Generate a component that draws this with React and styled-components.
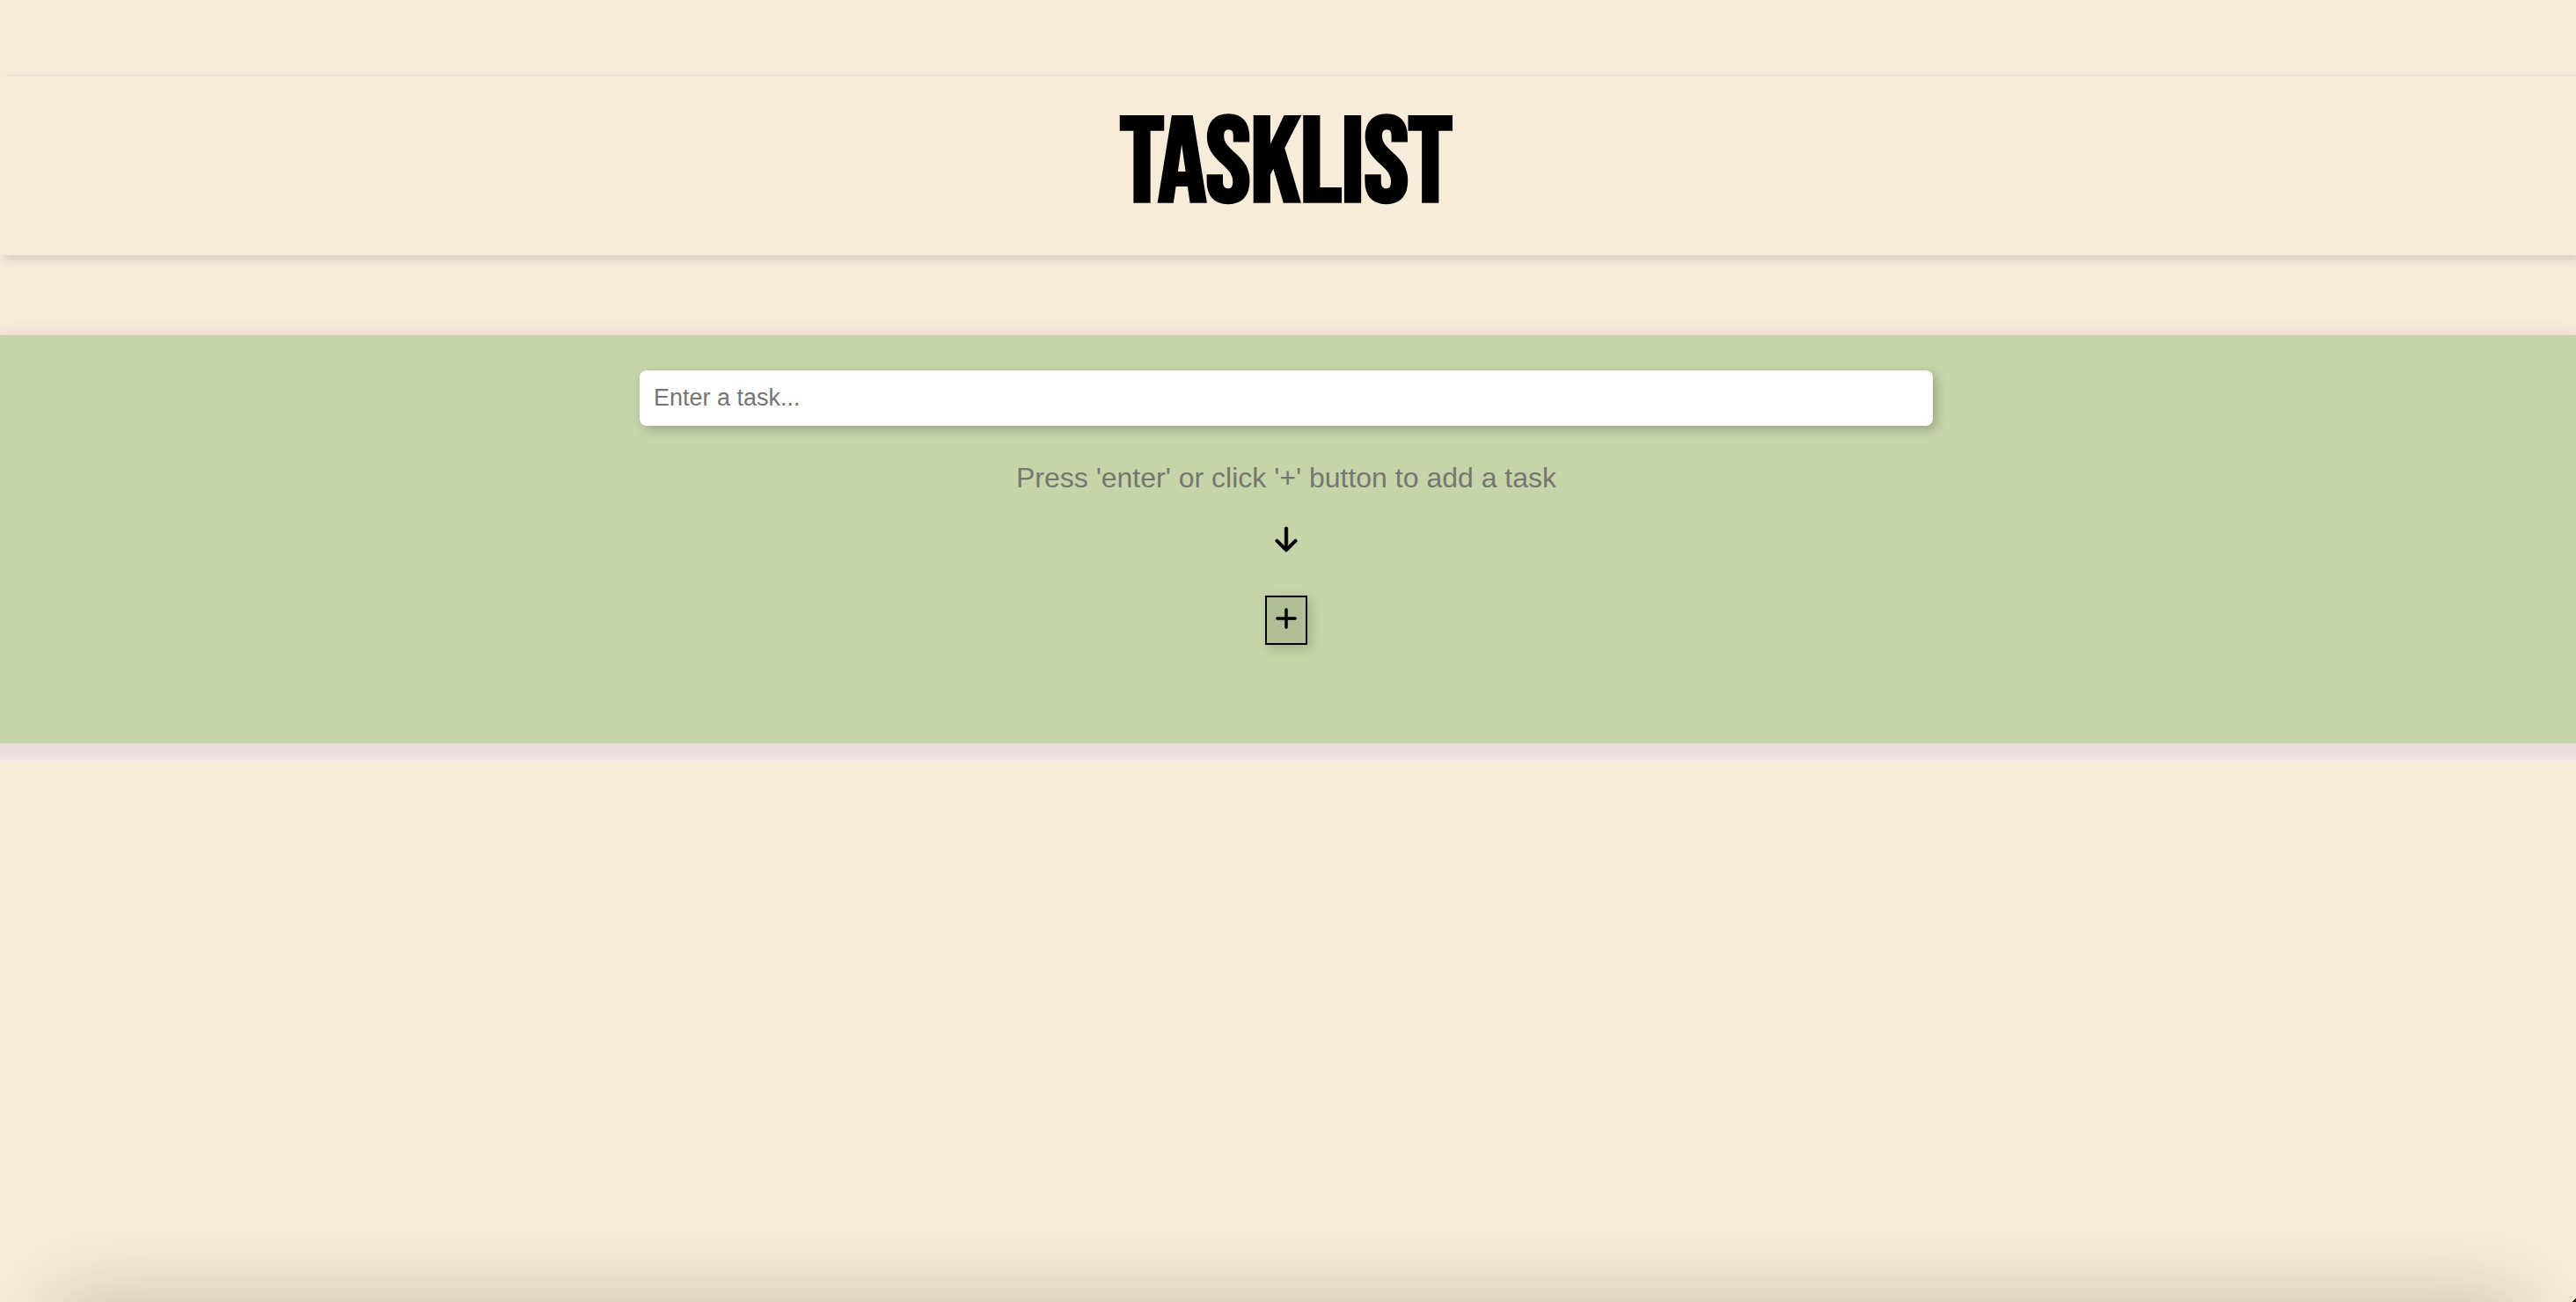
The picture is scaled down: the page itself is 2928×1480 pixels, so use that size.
import React, { useState } from "react";
import styled, { createGlobalStyle } from "styled-components";
import { BsArrowDownShort, BsPlus } from "react-icons/bs";

const GlobalStyle = createGlobalStyle`
  *, *::before, *::after { box-sizing: border-box; }
  body {
    margin: 0;
    background: #f7ebda;
    color: #000;
    font-family: "Liberation Sans", Arial, sans-serif;
  }
`;

const Page = styled.div`
  display: flex;
  flex-direction: column;
  min-height: 100vh;
  padding-top: 87px;
  overflow: hidden;
  position: relative;
`;

const Header = styled.header`
  display: flex;
  justify-content: center;
  align-items: center;
  height: 203px;
  padding-right: 4px;
  background: #f7ebda;
  box-shadow: 4px 4px 12px rgba(0, 0, 0, 0.15);
`;

const Title = styled.h1`
  margin: 0;
  font-family: "Bebas Neue", "Liberation Sans Narrow", "Liberation Sans", sans-serif;
  font-size: 136px;
  line-height: 160px;
  font-weight: 700;
  text-transform: uppercase;
`;

const EntryForm = styled.form`
  display: flex;
  flex-direction: column;
  align-items: center;
  margin-top: 91px;
  padding: 40px 4px 112px 0;
  background: #c6d4a9;
  box-shadow: 0 0 16px rgba(210, 150, 140, 0.3);
`;

const TaskInput = styled.input`
  width: calc(50% + 8px);
  height: 63px;
  padding: 0 16px;
  border: 0;
  border-radius: 8px;
  background: #fff;
  font: 27px "Liberation Sans", Arial, sans-serif;
  box-shadow: 4px 4px 12px rgba(0, 0, 0, 0.22);
  &::placeholder { color: #757575; opacity: 1; }
`;

const Hint = styled.p`
  margin: 40px 0 0;
  font-size: 32px;
  line-height: 38px;
  color: #75776f;
`;

const Arrow = styled(BsArrowDownShort)`
  display: block;
  width: 56px;
  height: 56px;
  margin-top: 23px;
  stroke-width: 0.2px;
`;

const AddButton = styled.button`
  display: flex;
  justify-content: center;
  align-items: center;
  width: 48px;
  height: 56px;
  margin-top: 36px;
  padding: 0 0 4px;
  border: 2px solid #000;
  background: #b1bd97;
  color: #000;
  box-shadow: 4px 4px 12px rgba(0, 0, 0, 0.18);
  svg {
    flex: none;
    width: 46px;
    height: 46px;
    stroke-width: 0.2px;
  }
`;

const TaskList = styled.section`
  flex: 1;
  position: relative;
  background: #f7ebda;
  &::before {
    content: "";
    display: block;
    height: 20px;
    background: linear-gradient(#e9dcdb, #ebdbdb 50%, #f2eae9);
  }
`;

const DockShadow = styled.footer`
  position: relative;
  height: 200px;
  margin: 0 64px -200px;
  box-shadow: 0 0 88px rgba(70, 50, 20, 0.25);
`;

const Corner = styled.span`
  position: absolute;
  right: 0;
  bottom: 0;
  width: 4px;
  height: 4px;
  background: linear-gradient(135deg, transparent 50%, #1c1a12 50%);
`;

export default function App() {
  const [task, setTask] = useState("");
  const submit = (event) => {
    event.preventDefault();
    setTask("");
  };
  return (
    <>
      <GlobalStyle />
      <Page>
        <Header>
          <Title>Tasklist</Title>
        </Header>
        <EntryForm onSubmit={submit}>
          <TaskInput
            type="text"
            aria-label="Task"
            placeholder="Enter a task..."
            value={task}
            onChange={(event) => setTask(event.target.value)}
          />
          <Hint>Press 'enter' or click '+' button to add a task</Hint>
          <Arrow aria-hidden="true" />
          <AddButton type="submit" aria-label="Add task">
            <BsPlus />
          </AddButton>
        </EntryForm>
        <TaskList aria-label="Tasks" />
        <DockShadow />
        <Corner />
      </Page>
    </>
  );
}
